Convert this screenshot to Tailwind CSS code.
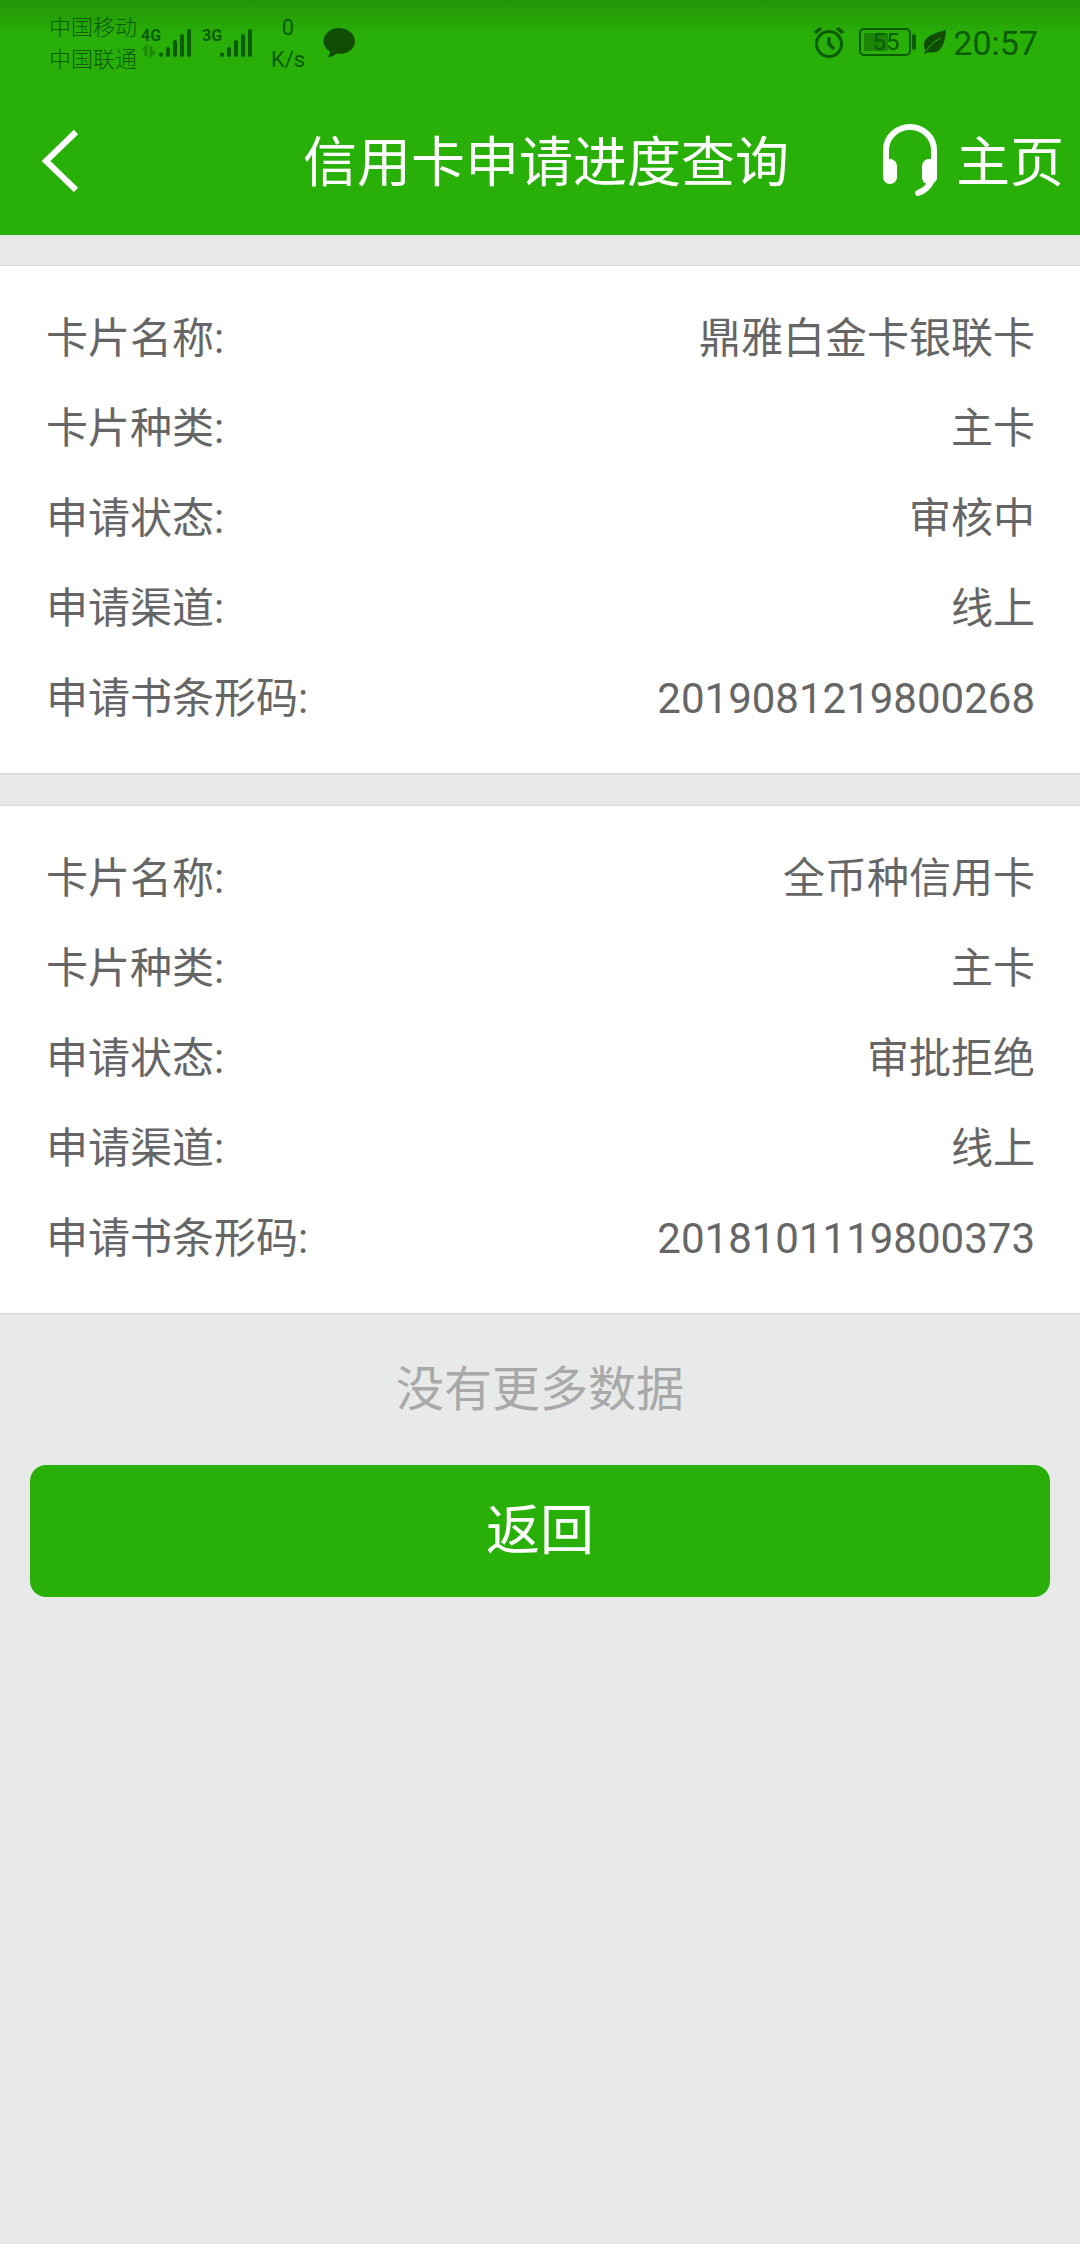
<!DOCTYPE html>
<html lang="zh-CN">
<head>
    <meta charset="UTF-8">
    <meta name="viewport" content="width=device-width, initial-scale=1.0">
    <title>信用卡申请进度查询</title>
    <script src="https://cdn.jsdelivr.net/npm/@tailwindcss/browser@4"></script>
</head>
<body class="min-h-screen bg-[#e8eaea] font-[Roboto,'Noto_Sans_CJK_SC',sans-serif] text-[#666]">
    <header class="bg-[#28b008] bg-linear-to-b from-[#229406] via-[#28b008] via-15% to-[#28b008]">
        <!-- Barre d'état -->
        <div class="flex h-[84px] items-center justify-between pl-[49px] pr-[42px] text-[#0b5c02]">
            <div class="flex items-center">
                <div class="pt-1 text-[22px] font-light leading-8">
                    <div>中国移动</div>
                    <div>中国联通</div>
                </div>
                <svg class="ml-1 h-9 w-[52px]" viewBox="0 0 52 36" fill="none" stroke="currentColor" stroke-width="4" stroke-linecap="round">
                    <text x="0" y="17" font-size="16" font-weight="700" font-family="Roboto" fill="currentColor" stroke="none">4G</text>
                    <path d="M20 30.500v.500M27 25v6M34 18v13M41 12v19M48 7v24" />
                    <path d="M5 31v-8l-2 2M10 23v8l3-3" stroke="#1c8a06" stroke-width="3" />
                </svg>
                <svg class="ml-[9px] h-9 w-[52px]" viewBox="0 0 52 36" fill="none" stroke="currentColor" stroke-width="4" stroke-linecap="round">
                    <text x="0" y="17" font-size="16" font-weight="700" font-family="Roboto" fill="currentColor" stroke="none">3G</text>
                    <path d="M20 30.500v.500M27 25v6M34 18v13M41 12v19M48 7v24" />
                </svg>
                <div class="ml-4 w-9 pt-1 text-center text-[22px] leading-8">
                    <div>0</div>
                    <div>K/s</div>
                </div>
                <svg class="ml-[17px] h-8 w-8" viewBox="0 0 32 32" fill="#104c02">
                    <path d="M16 2C7.500 2 .500 8 .500 15c0 4.500 2.500 8 6.500 10.500 0 2-1 3.500-2 5.500 3.500 0 6.500-1.500 8.500-3.500 11 1.500 18.500-4.500 18.500-12.500C32 8 24.500 2 16 2z" />
                </svg>
            </div>
            <div class="flex items-center">
                <svg class="h-8 w-8" viewBox="0 0 32 32" fill="none" stroke="currentColor" stroke-width="3">
                    <circle cx="16" cy="18" r="12.500" />
                    <path d="M16 11v7l5 5" stroke-width="3.500" />
                    <path d="M2 7l6-5M24 2l6 5" stroke-width="3.500" />
                </svg>
                <svg class="ml-3 h-7 w-[62px]" viewBox="0 0 62 28">
                    <rect x="3" y="1" width="50" height="26" rx="4" fill="none" stroke="currentColor" stroke-width="2" />
                    <rect x="7" y="5" width="24" height="18" fill="#1d8506" />
                    <path d="M57 8v12" stroke="currentColor" stroke-width="4" stroke-linecap="round" />
                    <text x="29" y="22" text-anchor="middle" font-size="24" font-family="Roboto" fill="currentColor">55</text>
                </svg>
                <svg class="ml-1 h-6 w-6" viewBox="0 0 24 24">
                    <path d="M23 0C12 3 1 6 1 15c0 3 1 5 2 6l-2 2 1 1 3-2c11 3 17-5 18-22z" fill="#104c02" />
                    <path d="M4 20c4-6 8-9 14-12" fill="none" stroke="#28b008" stroke-width="1" />
                </svg>
                <time class="ml-1.5 pt-0.5 text-[34px] leading-10">20:57</time>
            </div>
        </div>
        <!-- Barre de titre -->
        <div class="grid h-[151px] grid-cols-[1fr_auto_1fr] items-center pl-7 pr-4 text-white">
            <button type="button" aria-label="后退" class="ml-3 justify-self-start">
                <svg class="h-16 w-10" viewBox="0 0 40 64" fill="none" stroke="currentColor" stroke-width="6">
                    <path d="M36 4L6 33l30 29" />
                </svg>
            </button>
            <h1 class="pt-2 text-[54px] leading-[72px]">信用卡申请进度查询</h1>
            <div class="flex items-center gap-[18px] justify-self-end">
                <button type="button" aria-label="客服">
                    <svg class="h-[72px] w-14" viewBox="0 0 56 72" fill="none" stroke="currentColor">
                        <path d="M4 40V26a24 23 0 0 1 48 0v14" stroke-width="6" />
                        <path d="M1 35h7a7 7 0 0 1 7 7v11a7 7 0 0 1-14 0zM55 35h-8a7 7 0 0 0-7 7v11a7 7 0 0 0 5 7h4a9 9 0 0 0 6-5z" fill="currentColor" stroke="none" />
                        <path d="M50 56c-3 7-8 11-14 13" stroke-width="6" stroke-linecap="round" />
                    </svg>
                </button>
                <a href="#" class="pt-2 text-[54px] leading-[72px]">主页</a>
            </div>
        </div>
    </header>

    <main class="pt-[30px]">
        <div id="liste-demandes" class="flex flex-col gap-[30px]"></div>
        <p class="pb-[39px] pt-[39px] text-center text-[48px] leading-[72px] text-[#a9a9a9]">没有更多数据</p>
        <div class="px-[30px]">
            <button type="button" class="h-[132px] w-full rounded-2xl bg-[#28b008] text-[54px] text-white">返回</button>
        </div>
    </main>

    <script>
    // Demandes de carte et leur avancement
    const demandes = [
        { nom: "鼎雅白金卡银联卡", type: "主卡", statut: "审核中", canal: "线上", code: "2019081219800268" },
        { nom: "全币种信用卡", type: "主卡", statut: "审批拒绝", canal: "线上", code: "2018101119800373" }
    ];

    function ligne(label, valeur) {
        return `<div class="flex h-[90px] items-center justify-between">
            <dt>${label}:</dt>
            <dd>${valeur}</dd>
        </div>`;
    }

    document.getElementById('liste-demandes').innerHTML = demandes.map(d =>
        `<dl class="border-b-2 border-t border-[#dcdede] bg-white pb-[29px] pl-[46px] pr-[45px] pt-7 text-[42px] leading-[60px]">
            ${ligne("卡片名称", d.nom)}
            ${ligne("卡片种类", d.type)}
            ${ligne("申请状态", d.statut)}
            ${ligne("申请渠道", d.canal)}
            ${ligne("申请书条形码", d.code)}
        </dl>`
    ).join('');
    </script>
</body>
</html>
